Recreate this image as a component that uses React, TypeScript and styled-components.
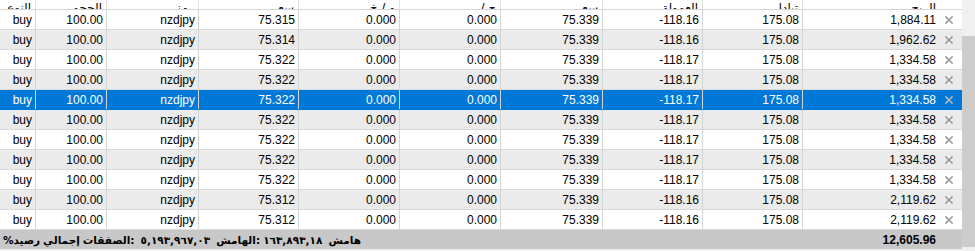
import React, { FunctionComponent } from 'react';
import styled, { createGlobalStyle } from 'styled-components';

const GlobalStyle = createGlobalStyle`
  html, body {
    margin: 0;
    padding: 0;
    background: #f0f0f0;
  }
  body {
    font-family: 'Liberation Sans', 'DejaVu Sans', sans-serif;
    direction: ltr;
  }
`;

const COLUMNS = '36px 71px 92px 100px 101px 101px 102px 100px 100px 159px';

const Page = styled.div`
  width: 975px;
  height: 251px;
  overflow: hidden;
  display: grid;
  grid-template-columns: 962px 13px;
  background: #f0f0f0;
`;

const Table = styled.div`
  display: flex;
  flex-direction: column;
`;

const HeaderRow = styled.div`
  display: grid;
  grid-template-columns: ${COLUMNS};
  height: 10px;
  box-sizing: border-box;
  background: #fff;
  border-bottom: 1px solid #d6d6d6;
  overflow: hidden;
`;

const HeaderCell = styled.div`
  display: flex;
  justify-content: flex-end;
  align-items: flex-end;
  padding-right: 4px;
  border-right: 1px solid #e3e3e3;
  font-family: 'DejaVu Sans', sans-serif;
  font-size: 12px;
  line-height: 14px;
  color: #000;
  overflow: hidden;
  white-space: nowrap;
  & > span {
    margin-bottom: -6px;
  }
  &:last-child {
    border-right: none;
    padding-right: 26px;
  }
`;

const Row = styled.div<{ $alt: boolean; $selected: boolean }>`
  display: grid;
  grid-template-columns: ${COLUMNS};
  height: 20px;
  box-sizing: border-box;
  border-bottom: 1px solid ${(p) => (p.$selected ? '#0078d7' : '#d9d9d9')};
  background: ${(p) => (p.$selected ? '#0078d7' : p.$alt ? '#ebebeb' : '#fff')};
  color: ${(p) => (p.$selected ? '#fff' : '#000')};
`;

const Cell = styled.div`
  display: flex;
  justify-content: flex-end;
  align-items: center;
  padding-right: 3px;
  border-right: 1px solid #d4d4d4;
  font-size: 12px;
  white-space: nowrap;
  overflow: hidden;
  &:last-child {
    border-right: none;
    padding-right: 0;
  }
`;

const CloseBox = styled.span`
  width: 26px;
  display: flex;
  justify-content: center;
  align-items: center;
`;

const Footer = styled.div`
  height: 19px;
  background: #c8c8c8;
  display: flex;
  justify-content: space-between;
  align-items: center;
  padding: 0 26px 0 3px;
  font-size: 12px;
  font-weight: bold;
  color: #000;
`;

const Summary = styled.div`
  display: flex;
  flex-direction: row;
  align-items: center;
  direction: ltr;
  font-family: 'DejaVu Sans', sans-serif;
  font-size: 10.5px;
`;

const Word = styled.span<{ $space: number }>`
  display: block;
  direction: ltr;
  unicode-bidi: isolate;
  margin-right: ${(p) => p.$space}px;
`;

const Total = styled.span`
  font-family: 'Liberation Sans', sans-serif;
`;

const Scrollbar = styled.div`
  display: flex;
  flex-direction: column;
  background: #f0f0f0;
  padding: 36px 0 4px;
`;

const Thumb = styled.div`
  flex: 1;
  background: #cdcdcd;
`;

const CloseIcon: FunctionComponent<{ selected: boolean }> = ({ selected }) => (
  <svg width="8" height="8" viewBox="0 0 8 8">
    <path
      d="M1 1 L7 7 M7 1 L1 7"
      stroke={selected ? '#b4b4b4' : '#9c9c9c'}
      strokeWidth="1.7"
      strokeLinecap="square"
    />
  </svg>
);

const headers = ['النوع', 'الحجم', 'رمز', 'سعر', 'و / خ', 'ج / ر', 'سعر', 'العمولة', 'تبادل', 'الربح'];

// visual order, left to right, as the terminal draws it
const summary: [string, number][] = [
  ['%', 0],
  ['رصيد', 3],
  ['إجمالي', 3],
  ['الصفقات', 0],
  [':', 6],
  ['٥,١٩٣,٩٦٧,٠٣', 6],
  ['الهامش', 0],
  [':', 3],
  ['١٦٣,٨٩٣,١٨', 6],
  ['هامش', 0],
];

type Deal = { open: string; commission: string; profit: string };

const deals: Deal[] = [
  { open: '75.315', commission: '-118.16', profit: '1,884.11' },
  { open: '75.314', commission: '-118.16', profit: '1,962.62' },
  { open: '75.322', commission: '-118.17', profit: '1,334.58' },
  { open: '75.322', commission: '-118.17', profit: '1,334.58' },
  { open: '75.322', commission: '-118.17', profit: '1,334.58' },
  { open: '75.322', commission: '-118.17', profit: '1,334.58' },
  { open: '75.322', commission: '-118.17', profit: '1,334.58' },
  { open: '75.322', commission: '-118.17', profit: '1,334.58' },
  { open: '75.322', commission: '-118.17', profit: '1,334.58' },
  { open: '75.312', commission: '-118.16', profit: '2,119.62' },
  { open: '75.312', commission: '-118.16', profit: '2,119.62' },
];

const SELECTED = 4;

const App: FunctionComponent = () => (
  <>
    <GlobalStyle />
    <Page>
      <Table>
        <HeaderRow>
          {headers.map((h, i) => (
            <HeaderCell key={i}>
              <span>{h}</span>
            </HeaderCell>
          ))}
        </HeaderRow>
        {deals.map((d, i) => (
          <Row key={i} $alt={i % 2 === 1} $selected={i === SELECTED}>
            <Cell>buy</Cell>
            <Cell>100.00</Cell>
            <Cell>nzdjpy</Cell>
            <Cell>{d.open}</Cell>
            <Cell>0.000</Cell>
            <Cell>0.000</Cell>
            <Cell>75.339</Cell>
            <Cell>{d.commission}</Cell>
            <Cell>175.08</Cell>
            <Cell>
              {d.profit}
              <CloseBox>
                <CloseIcon selected={i === SELECTED} />
              </CloseBox>
            </Cell>
          </Row>
        ))}
        <Footer>
          <Summary>
            {summary.map(([w, s], i) => (
              <Word key={i} $space={s}>
                {w}
              </Word>
            ))}
          </Summary>
          <Total>12,605.96</Total>
        </Footer>
      </Table>
      <Scrollbar>
        <Thumb />
      </Scrollbar>
    </Page>
  </>
);

export default App;
